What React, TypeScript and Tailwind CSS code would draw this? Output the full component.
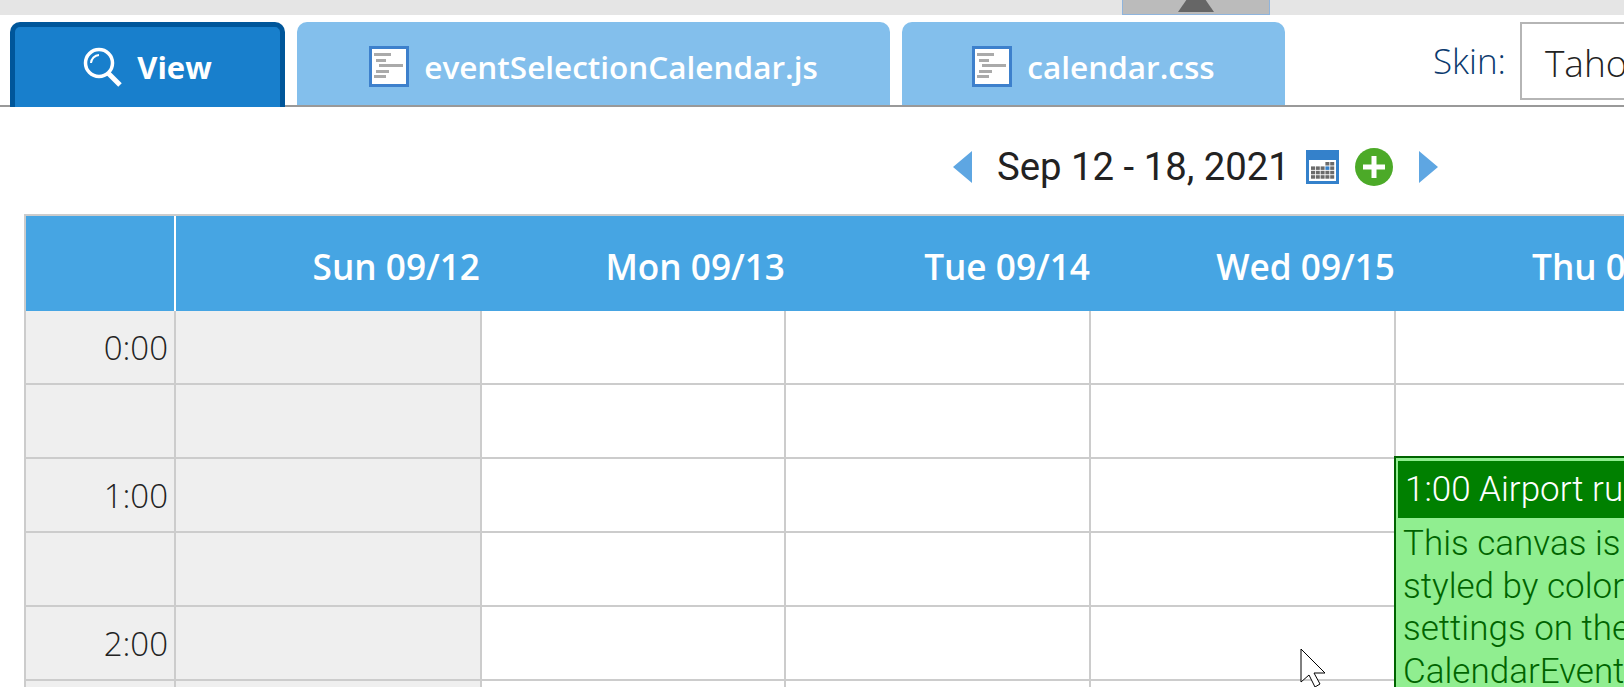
import React from 'react';

const days = ['Sun 09/12', 'Mon 09/13', 'Tue 09/14', 'Wed 09/15', 'Thu 09/16'];
const rows = ['0:00', '', '1:00', '', '2:00', ''];

const FileIcon = () => (
  <svg width="40" height="41" viewBox="0 0 40 41" className="shrink-0">
    <rect x="1.5" y="1.5" width="37" height="38" fill="#ffffff" stroke="#3d80cc" strokeWidth="3" />
    <rect x="5" y="7" width="17" height="3" fill="#aaaaaa" />
    <rect x="7" y="13" width="10" height="3" fill="#aaaaaa" />
    <rect x="10" y="18" width="24" height="3" fill="#aaaaaa" />
    <rect x="7" y="24" width="13" height="3" fill="#aaaaaa" />
    <rect x="5" y="29" width="12" height="3" fill="#aaaaaa" />
  </svg>
);

const SearchIcon = () => (
  <svg width="40" height="40" viewBox="0 0 40 40" fill="none" stroke="#ffffff" className="shrink-0">
    <circle cx="16" cy="16" r="13.5" strokeWidth="3.5" />
    <path d="M8 16a8.5 8.5 0 0 1 8-8" strokeWidth="2" />
    <path d="M25 26l12 12" strokeWidth="5" />
  </svg>
);

const CalendarIcon = () => (
  <svg width="33" height="34" viewBox="0 0 33 34" className="shrink-0 ml-[16px]">
    <rect width="33" height="34" fill="#3481cb" />
    <rect x="3" y="10" width="27" height="21" fill="#ffffff" />
    {[0, 1, 2, 3].map((r) =>
      [0, 1, 2, 3, 4].map((c) =>
        r === 0 && c < 3 ? null : (
          <rect
            key={`${r}-${c}`}
            x={5 + c * 4.8}
            y={12 + r * 4.4}
            width="4"
            height="3.5"
            fill={r === 1 && c === 3 ? '#3481cb' : '#6b6b6b'}
          />
        ),
      ),
    )}
  </svg>
);

const PlusIcon = () => (
  <svg width="38" height="38" viewBox="0 0 38 38" className="shrink-0 ml-[16px]">
    <circle cx="19" cy="19" r="19" fill="#4caa28" />
    <path d="M19 8v22M8 19h22" stroke="#ffffff" strokeWidth="5" />
  </svg>
);

const Tab = ({ label, width }: { label: string; width: string }) => (
  <div className={`${width} shrink-0 h-[83px] bg-[#83bfec] rounded-t-[10px] flex items-center justify-center gap-[15px] pt-[6px]`}>
    <FileIcon />
    <span className="text-[31.5px] font-semibold text-white font-['Open_Sans',sans-serif]">{label}</span>
  </div>
);

export default function App() {
  return (
    <div className="relative w-[1624px] h-[687px] overflow-hidden bg-white flex flex-col">
      <div className="h-[15px] bg-[#e5e5e5] shrink-0">
        <div className="ml-[1122px] w-[148px] h-[15px] overflow-hidden bg-[#bbbbbb] border-x border-b border-[#8fb4dc] flex justify-center">
          <div className="w-0 h-0 -mt-[14px] border-x-[18px] border-x-transparent border-b-[26px] border-b-[#666666]" />
        </div>
      </div>

      <div className="h-[92px] shrink-0 border-b-2 border-[#999999] pt-[7px] pl-[10px] flex gap-[12px]">
        <div className="w-[275px] shrink-0 h-[85px] bg-[#187fcc] border-[5px] border-b-0 border-[#00569a] rounded-t-[10px] flex items-center justify-center gap-[14px]">
          <SearchIcon />
          <span className="text-[31px] font-bold text-white font-['Open_Sans',sans-serif]">View</span>
        </div>
        <Tab label="eventSelectionCalendar.js" width="w-[593px]" />
        <Tab label="calendar.css" width="w-[383px]" />
        <div className="ml-[136px] flex items-start">
          <span className="mt-[13px] text-[35px] font-light text-[#0b3a6e] font-['Open_Sans',sans-serif]">Skin:</span>
          <div className="ml-[14px] w-[260px] h-[78px] border-2 border-[#b5b5b5] pl-[23px] pt-[11px] text-[37px] font-light text-[#222222] font-['Open_Sans',sans-serif] shrink-0">
            Tahoe
          </div>
        </div>
      </div>

      <div className="h-[107px] shrink-0 flex items-center pl-[953px] pt-[13px]">
        <div className="w-0 h-0 border-y-[16px] border-y-transparent border-r-[19px] border-r-[#5ea6e2]" />
        <span className="ml-[25px] text-[38.3px] text-[#222222] font-['Roboto',sans-serif] whitespace-nowrap">Sep 12 - 18, 2021</span>
        <CalendarIcon />
        <PlusIcon />
        <div className="ml-[26px] w-0 h-0 border-y-[16px] border-y-transparent border-l-[19px] border-l-[#5ea6e2]" />
      </div>

      <div className="relative ml-[24px] w-[1800px] border-l-2 border-t-2 border-[#cccccc]">
        <div className="flex h-[95px] bg-[#46a5e3] text-white font-semibold text-[35.2px] font-['Open_Sans',sans-serif]">
          <div className="w-[150px] border-r-2 border-white shrink-0" />
          {days.map((day, i) => (
            <div
              key={day}
              className={`${i === 0 ? 'w-[304px]' : 'w-[305px]'} shrink-0 text-right pt-[24px] whitespace-nowrap`}
            >
              {day}
            </div>
          ))}
        </div>
        {rows.map((label, r) => (
          <div key={r} className="flex h-[74px] border-b-2 border-[#cccccc]">
            <div className="w-[150px] shrink-0 bg-[#efefef] border-r-2 border-[#cccccc] text-right pr-[6px] pt-[12px] text-[33px] font-light text-[#222222] font-['Open_Sans',sans-serif]">
              {label}
            </div>
            {days.map((day, i) => (
              <div
                key={day}
                className={`${i === 0 ? 'w-[306px] bg-[#efefef]' : i === 1 ? 'w-[304px]' : 'w-[305px]'} shrink-0 border-r-2 border-[#cccccc]`}
              />
            ))}
          </div>
        ))}

        <div className="absolute left-[1368px] top-[240px] w-[400px] h-[300px] bg-[#90ee90] border-2 border-[#006400] pt-[3px] px-[2px] font-['Roboto',sans-serif]">
          <div className="h-[57px] bg-[#008000] text-white text-[35px] font-light pl-[7px] pt-[3px] whitespace-nowrap">1:00 Airport run</div>
          <div className="pl-[5px] pt-[5px] text-[35px] leading-[42.5px] font-light text-[#006400] whitespace-nowrap">
            <div>This canvas is</div>
            <div>styled by color</div>
            <div>settings on the</div>
            <div>CalendarEvent</div>
          </div>
        </div>
      </div>

      <svg width="27" height="40" viewBox="0 0 27 40" className="absolute left-[1300px] top-[648px]">
        <path d="M1 1v33l8-7 6 12 5-3-6-11h11z" fill="#ffffff" stroke="#000000" strokeWidth="1" />
      </svg>
    </div>
  );
}
